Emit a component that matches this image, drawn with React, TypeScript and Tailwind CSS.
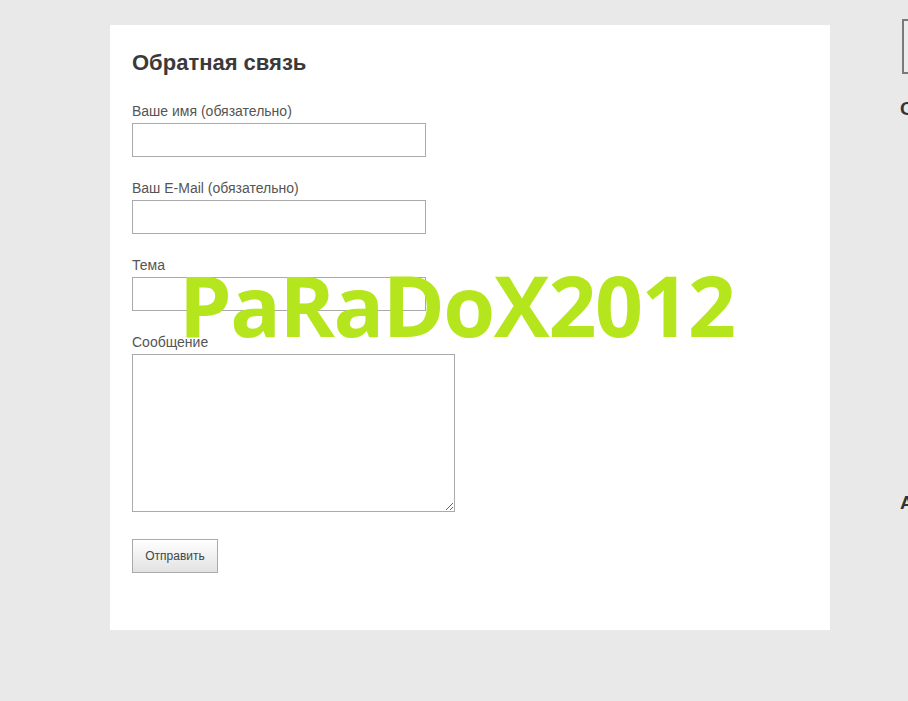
export default function App() {
  const fields = [
    { label: 'Ваше имя (обязательно)' },
    { label: 'Ваш E-Mail (обязательно)' },
    { label: 'Тема' },
  ]

  return (
    <div className="relative flex h-[701px] w-full overflow-hidden bg-[#e9e9e9] font-['Liberation_Sans',Arial,sans-serif]">
      {/* Основная карточка */}
      <main className="ml-[110px] mt-[25px] h-[605px] w-[720px] shrink-0 bg-white px-[22px] pt-[24px]">
        <h1 className="text-[22px] font-bold leading-[28px] text-[#3a3a3a]">Обратная связь</h1>

        <form className="mt-[23px] flex flex-col" onSubmit={(e) => e.preventDefault()}>
          {fields.map((f) => (
            <div key={f.label} className="mb-[20px]">
              <label className="block text-[14px] leading-[22px] text-[#555]">{f.label}</label>
              <input
                type="text"
                className="mt-[1px] block h-[34px] w-[294px] border border-[#aaa] bg-white px-2 outline-none"
              />
            </div>
          ))}

          <div className="mb-[27px]">
            <label className="block text-[14px] leading-[22px] text-[#555]">Сообщение</label>
            <textarea className="mt-[1px] block h-[158px] w-[323px] border border-[#aaa] bg-white px-2 outline-none" />
          </div>

          <div>
            <button
              type="submit"
              className="h-[34px] w-[86px] border border-[#aaa] bg-gradient-to-b from-white to-[#e2e2e2] text-[12px] text-[#444]"
            >
              Отправить
            </button>
          </div>
        </form>
      </main>

      {/* Боковая колонка */}
      <aside className="ml-[70px] w-[200px] shrink-0 pt-[19px]">
        <div className="ml-[2px] h-[55px] w-[180px] border-2 border-[#7a7a7a] bg-[#ececec]" />
        <h3 className="mt-[23px] text-[19px] font-bold leading-[24px] text-[#333]">Свежие записи</h3>
        <h3 className="mt-[370px] text-[19px] font-bold leading-[24px] text-[#333]">Архивы</h3>
      </aside>

      {/* Водяной знак */}
      <div className="pointer-events-none absolute left-[179px] top-[255px] select-none font-['Open_Sans',sans-serif] text-[84px] font-bold leading-[100px] tracking-[-1.5px] text-[#b5e61d]">
        PaRaDoX2012
      </div>
    </div>
  )
}
